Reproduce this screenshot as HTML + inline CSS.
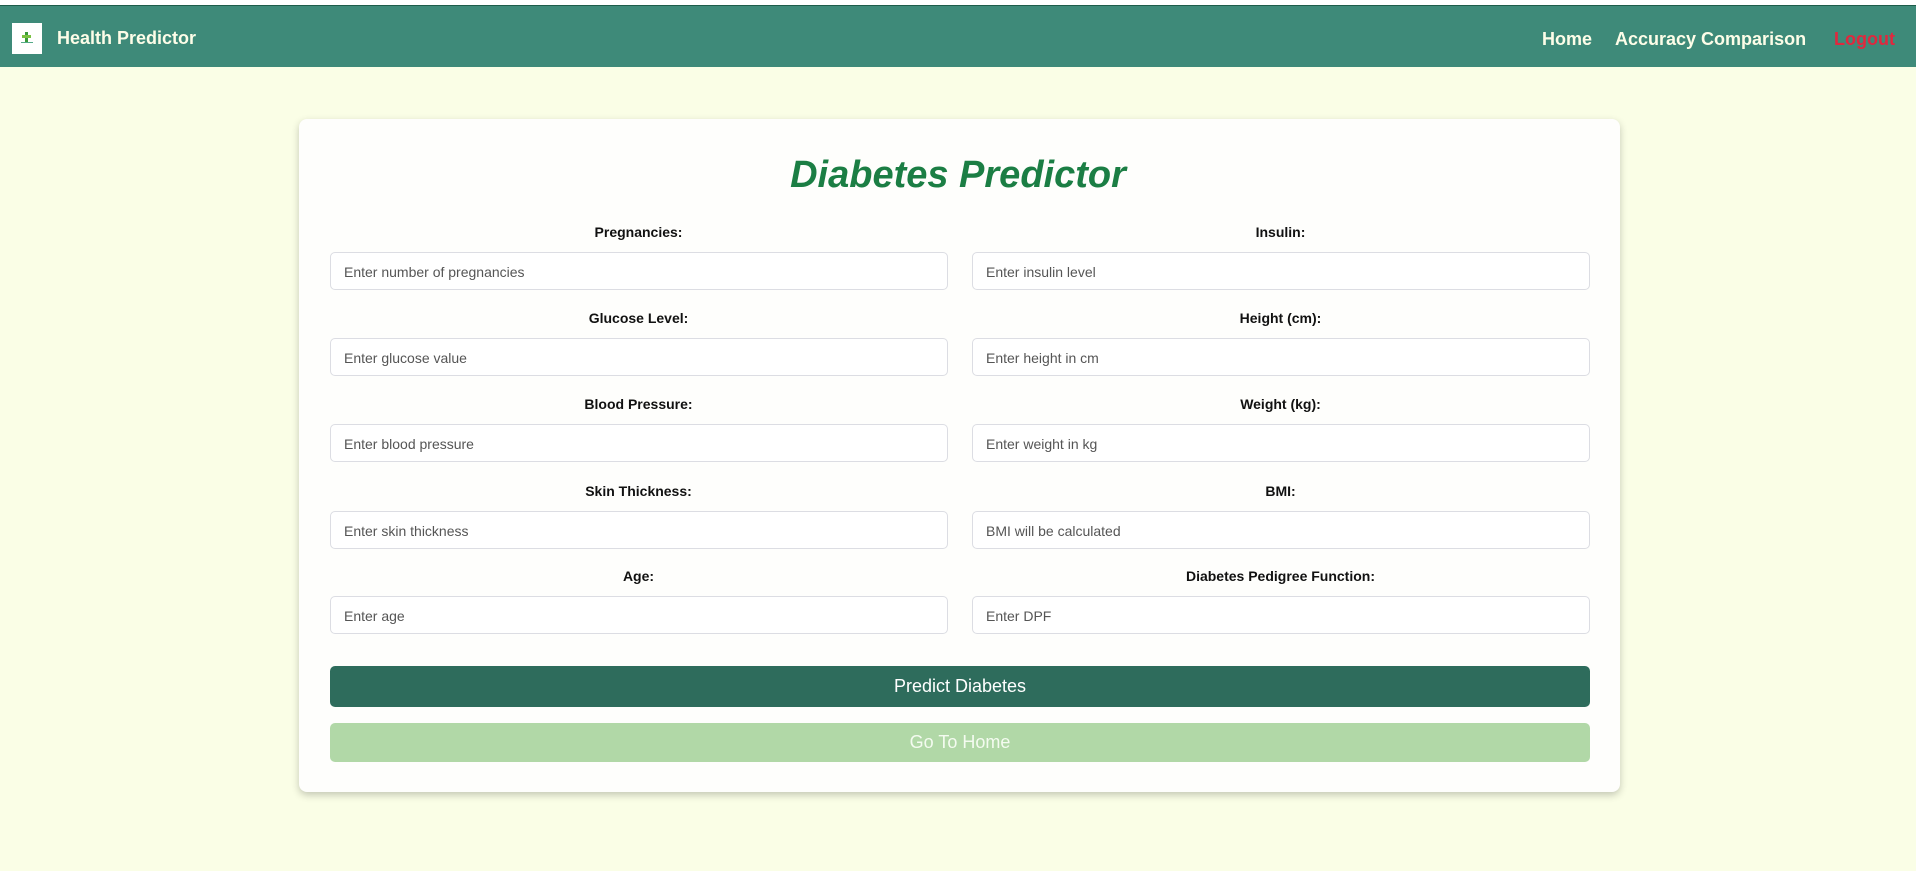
<!DOCTYPE html>
<html><head><meta charset="utf-8"><style>
*{box-sizing:border-box;margin:0;padding:0}
body{width:1916px;height:871px;background:#fafee6;font-family:"Liberation Sans",sans-serif;position:relative;overflow:hidden}
.top{position:absolute;left:0;top:0;width:1916px;height:6px;background:#fff;border-bottom:1px solid #1d5c4a}
.nav{position:absolute;left:0;top:6px;width:1916px;height:61px;background:#3e8a79}
.logo{position:absolute;left:12px;top:17px;width:30px;height:31px;background:#fff}
.brand{position:absolute;left:57px;top:22px;color:#fdfde8;font-weight:bold;font-size:18px}
.nl{position:absolute;top:23px;color:#fdfde8;font-weight:bold;font-size:18px;white-space:nowrap}
.card{position:absolute;left:299px;top:119px;width:1321px;height:673px;background:#fefefc;border-radius:8px;box-shadow:0 3px 8px rgba(0,0,0,.22)}
h1{position:absolute;left:0;width:100%;top:154px;text-align:center;color:#1b7e44;font-style:italic;font-weight:bold;font-size:38px}
.lbl{position:absolute;width:617px;text-align:center;font-weight:bold;font-size:14px;color:#111}
.inp{position:absolute;width:618px;height:38px;border:1px solid #dcdde3;border-radius:5px;background:#fff;font-size:14px;color:#555;padding:11px 13px}
.btn{position:absolute;left:330px;width:1260px;border-radius:5px;text-align:center;font-size:18px}
</style></head><body>
<div class="top"></div>
<div class="nav">
<div class="logo"><svg width="30" height="31"><rect x="13" y="9" width="3" height="10" fill="#3a9a3a"/><rect x="10" y="12" width="9" height="3" fill="#7ac142"/><rect x="9" y="19" width="12" height="1" fill="#5a8"/></svg></div>
<div class="brand">Health Predictor</div>
<div class="nl" style="left:1542px">Home</div>
<div class="nl" style="left:1615px">Accuracy Comparison</div>
<div class="nl" style="left:1834px;color:#e0283e">Logout</div>
</div>
<div class="card"></div>
<h1>Diabetes Predictor</h1>

<div class="lbl" style="left:330px;top:224px">Pregnancies:</div>
<div class="inp" style="left:330px;top:252px">Enter number of pregnancies</div>
<div class="lbl" style="left:972px;top:224px">Insulin:</div>
<div class="inp" style="left:972px;top:252px">Enter insulin level</div>

<div class="lbl" style="left:330px;top:310px">Glucose Level:</div>
<div class="inp" style="left:330px;top:338px">Enter glucose value</div>
<div class="lbl" style="left:972px;top:310px">Height (cm):</div>
<div class="inp" style="left:972px;top:338px">Enter height in cm</div>

<div class="lbl" style="left:330px;top:396px">Blood Pressure:</div>
<div class="inp" style="left:330px;top:424px">Enter blood pressure</div>
<div class="lbl" style="left:972px;top:396px">Weight (kg):</div>
<div class="inp" style="left:972px;top:424px">Enter weight in kg</div>

<div class="lbl" style="left:330px;top:483px">Skin Thickness:</div>
<div class="inp" style="left:330px;top:511px">Enter skin thickness</div>
<div class="lbl" style="left:972px;top:483px">BMI:</div>
<div class="inp" style="left:972px;top:511px">BMI will be calculated</div>

<div class="lbl" style="left:330px;top:568px">Age:</div>
<div class="inp" style="left:330px;top:596px">Enter age</div>
<div class="lbl" style="left:972px;top:568px">Diabetes Pedigree Function:</div>
<div class="inp" style="left:972px;top:596px">Enter DPF</div>

<div class="btn" style="top:666px;height:41px;line-height:41px;background:#2e6c5c;color:#fff">Predict Diabetes</div>
<div class="btn" style="top:723px;height:39px;line-height:39px;background:#b1d8a7;color:#f4fbf0">Go To Home</div>
</body></html>
